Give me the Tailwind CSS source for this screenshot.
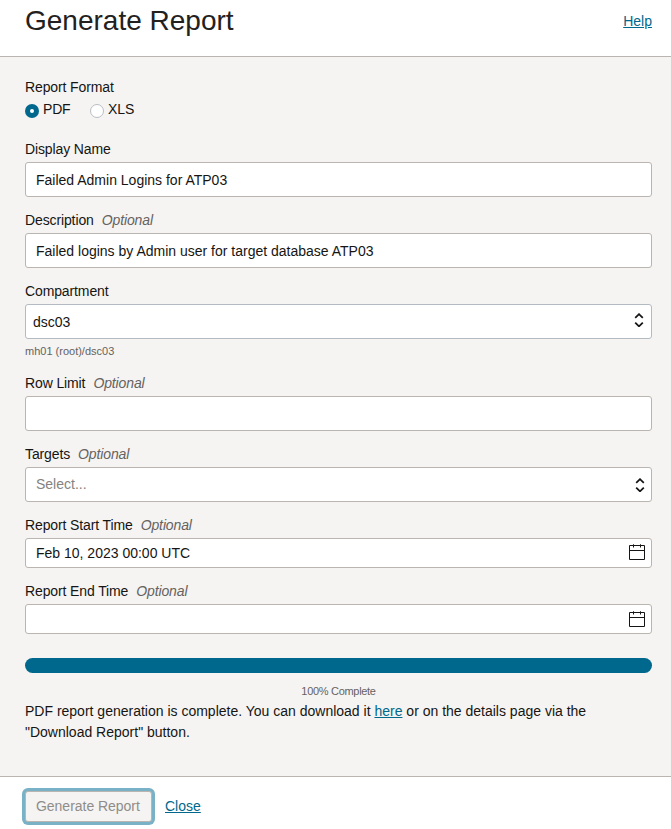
<!DOCTYPE html>
<html lang="en">
<head>
<meta charset="utf-8">
<title>Generate Report</title>
<script src="https://cdn.jsdelivr.net/npm/@tailwindcss/browser@4"></script>
</head>
<body class="w-[671px] h-[829px] overflow-hidden bg-white font-['Liberation_Sans',Arial,sans-serif] text-[14px] leading-5 text-[#161513]">
<div class="flex flex-col h-full">
  <header class="h-[57px] shrink-0 flex justify-between border-b border-[#bab5b0] pl-[25px] pr-[19px]">
    <h1 class="text-[28px] leading-8 pt-[5px] text-[#222120]">Generate Report</h1>
    <a href="#" class="pt-[11px] h-[31px] text-[#00688c] underline">Help</a>
  </header>

  <main class="h-[720px] shrink-0 bg-[#f5f4f2] border-b border-[#bab5b0] pl-[25px] pr-[19px] pt-5 flex flex-col">
    <div class="tracking-[-0.12px]">Report Format</div>
    <div class="flex mt-[2px] h-5">
      <label class="flex w-[65px] tracking-[-0.2px]"><span class="mt-[5px] mr-[4px] size-[14px] rounded-full bg-[#00688c] flex items-center justify-center"><span class="size-[4px] rounded-full bg-white"></span></span>PDF</label>
      <label class="flex"><span class="mt-[5px] mr-[4px] size-[14px] rounded-full bg-white border border-[#b9bec4]"></span>XLS</label>
    </div>

    <div class="mt-5 tracking-[-0.12px]">Display Name</div>
    <div class="mt-[3px] h-[35px] shrink-0 bg-white border border-[#bab5b0] rounded-[3px] px-[10px] flex items-center">Failed Admin Logins for ATP03</div>

    <div class="mt-[13px] tracking-[-0.12px]">Description<em class="ml-2 text-[#66625f]">Optional</em></div>
    <div class="mt-[3px] h-[35px] shrink-0 bg-white border border-[#bab5b0] rounded-[3px] px-[10px] flex items-center">Failed logins by Admin user for target database ATP03</div>

    <div class="mt-[13px] tracking-[-0.12px]">Compartment</div>
    <div class="mt-[3px] h-[35px] shrink-0 bg-white border border-[#b4bac1] rounded-[3px] pl-[7px] pr-[7px] flex items-center justify-between">dsc03
      <svg class="w-[10px] h-[14px] mt-[-3px]" viewBox="0 0 10 14" fill="none" stroke="#161513" stroke-width="1.8"><path d="M1.2 4.8 5 1.2 8.8 4.8M1.2 9.7 5 13.3 8.8 9.7"/></svg>
    </div>
    <div class="mt-[4px] h-4 text-[11px] leading-4 text-[#66625f]">mh01 (root)/dsc03</div>

    <div class="mt-[14px] tracking-[-0.12px]">Row Limit<em class="ml-2 text-[#66625f]">Optional</em></div>
    <div class="mt-[3px] h-[35px] shrink-0 bg-white border border-[#bab5b0] rounded-[3px]"></div>

    <div class="mt-[13px] tracking-[-0.12px]">Targets<em class="ml-2 text-[#66625f]">Optional</em></div>
    <div class="mt-[3px] h-[35px] shrink-0 bg-white border border-[#bab5b0] rounded-[3px] pl-[10px] pr-[6px] flex items-center justify-between text-[#85827f]"><span class="mb-[2px]">Select...</span>
      <svg class="w-[10px] h-[14px] mt-[1px]" viewBox="0 0 10 14" fill="none" stroke="#161513" stroke-width="1.8"><path d="M1.2 4.8 5 1.2 8.8 4.8M1.2 9.7 5 13.3 8.8 9.7"/></svg>
    </div>

    <div class="mt-[13px] tracking-[-0.12px]">Report Start Time<em class="ml-2 text-[#66625f]">Optional</em></div>
    <div class="mt-[3px] h-[30px] shrink-0 bg-white border border-[#bab5b0] rounded-[3px] pl-[10px] pr-[6px] flex items-center justify-between">Feb 10, 2023 00:00 UTC
      <svg class="w-[16px] h-[16px] mt-[-2px]" viewBox="0 0 16 16" fill="none" stroke="#161513"><path d="M.5 1.5h15v14H.5zM.5 6.5h15M4.5 .3v3.2M11.5 .3v3.2"/></svg>
    </div>

    <div class="mt-[13px] tracking-[-0.12px]">Report End Time<em class="ml-2 text-[#66625f]">Optional</em></div>
    <div class="mt-[3px] h-[30px] shrink-0 bg-white border border-[#bab5b0] rounded-[3px] pl-[10px] pr-[6px] flex items-center justify-end">
      <svg class="w-[16px] h-[16px]" viewBox="0 0 16 16" fill="none" stroke="#161513"><path d="M.5 1.5h15v14H.5zM.5 6.5h15M4.5 .3v3.2M11.5 .3v3.2"/></svg>
    </div>

    <div class="mt-6 h-[15px] shrink-0 rounded-full bg-[#00688c]"></div>
    <div class="mt-[10px] h-4 text-center text-[11px] leading-4 tracking-[-0.3px] text-[#66625f]">100% Complete</div>
    <p class="mt-[2px] leading-[21px]">PDF report generation is complete. You can download it <a href="#" class="text-[#00688c] underline">here</a> or on the details page via the<br>"Download Report" button.</p>
  </main>

  <footer class="flex pl-[25px] pt-[14px]">
    <button class="w-[127px] h-[31px] pl-[10px] pb-[2px] text-left rounded-[3px] border border-[#bab5b0] bg-[#f5f4f2] text-[#8f8c8a] tracking-[-0.03px] ring-3 ring-[#79b1c6]">Generate Report</button>
    <a href="#" class="ml-[13px] mt-[5px] text-[#00688c] underline">Close</a>
  </footer>
</div>
</body>
</html>
